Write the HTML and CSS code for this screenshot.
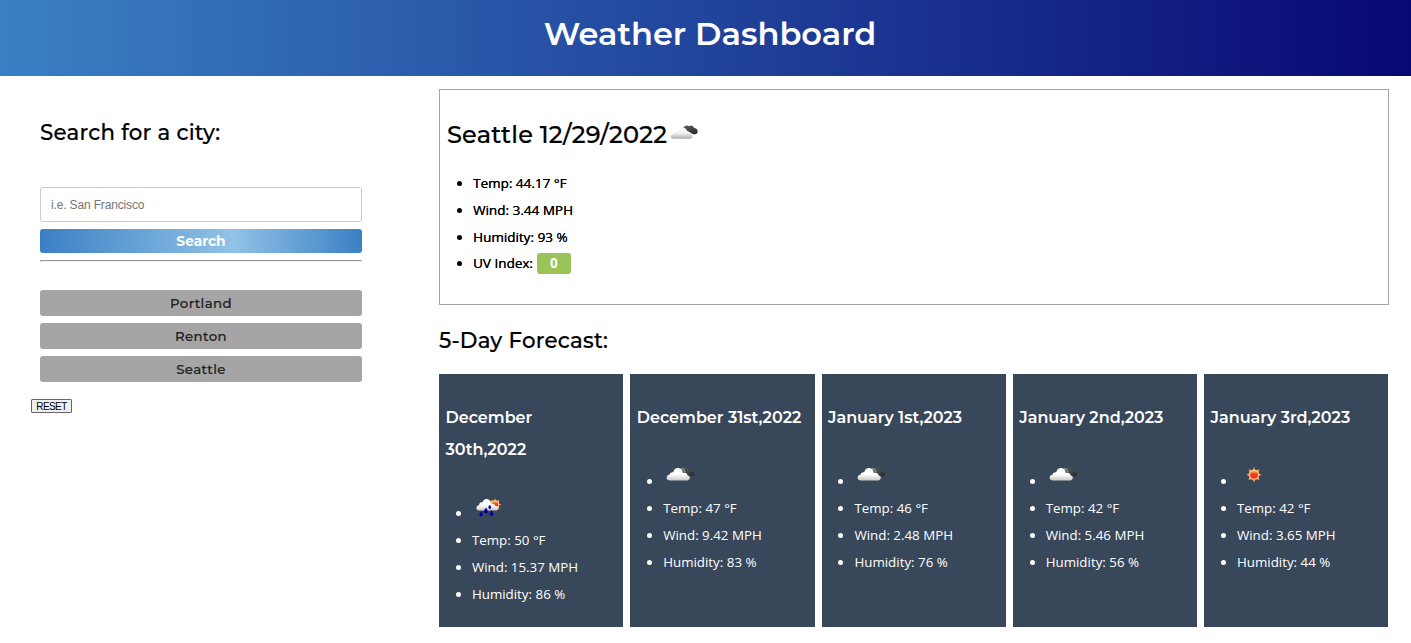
FILE: index.html
```html
<!DOCTYPE html>
<html lang="en">
<head>
<meta charset="utf-8">
<title>Weather Dashboard</title>
<link rel="stylesheet" href="styles.css">
</head>
<body>
<svg width="0" height="0" class="defs" aria-hidden="true">
  <defs>
    <linearGradient id="cloud" x1="0" y1="0" x2="0" y2="1"><stop offset="0.5" stop-color="#fff"/><stop offset="1" stop-color="#c8c8c8"/></linearGradient>
    <linearGradient id="pale" x1="0" y1="0" x2="0" y2="1"><stop offset="0" stop-color="#fff"/><stop offset="0.55" stop-color="#eee"/><stop offset="1" stop-color="#aaa"/></linearGradient>
    <linearGradient id="dark" x1="0" y1="0" x2="1" y2="1"><stop offset="0" stop-color="#666"/><stop offset="1" stop-color="#252525"/></linearGradient>
    <linearGradient id="sunfill" x1="0" y1="0" x2="0" y2="1"><stop offset="0.1" stop-color="#f5a14b"/><stop offset="0.45" stop-color="#f13a25"/><stop offset="1" stop-color="#ef3020"/></linearGradient>
    <g id="sun">
      <path d="M0-7.7 1.5-4.5 5.4-5.4 4.5-1.5 7.7 0 4.5 1.5 5.4 5.4 1.5 4.5 0 7.7-1.5 4.5-5.4 5.4-4.5 1.5-7.7 0-4.5-1.5-5.4-5.4-1.5-4.5Z" fill="#eba044"/>
      <circle r="5" fill="#ffdd98"/><circle r="4" fill="url(#sunfill)"/>
    </g>
    <path id="puff" d="M4 13.5C-.5 13.5-.3 8.200 3.500 7.800 3.700 5.500 5.800 4.800 7.200 5.300 8 1.700 11 .3 13.700 1.600 16 2.500 16.800 4.500 16.900 6.100 19.500 4.800 21.500 6.500 21.400 8.300 25 9 24.300 13.500 21 13.500Z"/>
    <path id="back" d="M14 3.500C15 .3 18.500-.6 20.300 1.800 22.500 1 24.500 2 24.600 4 27 3.800 28.500 5.500 28.400 6.800 28.800 8.500 26.500 9.300 24.500 9.100L21 8.600 17 5Z"/>
    <symbol id="clouds" viewBox="0 0 30 15"><use href="#back" fill="url(#dark)"/><path d="M14.300 2C16.500.9 18.500 3 18.900 5" fill="none" stroke="#bbb" stroke-width="1"/><use href="#puff" fill="url(#cloud)"/></symbol>
  </defs>
</svg>
<header class="banner"><h1>Weather Dashboard</h1></header>
<main class="layout">
  <aside class="sidebar">
    <h2 class="search-title">Search for a city:</h2>
    <input class="city-input" type="text" placeholder="i.e. San Francisco">
    <button class="search-btn">Search</button>
    <hr>
    <div class="history">
      <button>Portland</button>
      <button>Renton</button>
      <button>Seattle</button>
    </div>
    <button class="reset">RESET</button>
  </aside>
  <section class="content">
    <article class="current">
      <h2><span>Seattle 12/29/2022</span>
        <svg class="current-icon" viewBox="0 0 29 15"><path d="M12 4C14 .8 17-.6 19.200 1.200 21-.2 23.700 1 24 3 26.500 3 28 5 27.600 7 27.800 9 24.500 9.500 22.500 9L14 4Z" fill="url(#dark)"/><path d="M3.500 13.800C-.3 13.800 0 9 3.800 8.700 4 6.600 6 6 7.700 6.700 8.500 3.200 11 1.700 13.600 2.500 16 3.200 17 5 17 7 19.300 6 21 7.800 20.900 9.500 23.500 10.200 22.700 13.800 20 13.800Z" fill="url(#pale)"/></svg>
      </h2>
      <ul class="stats">
        <li>Temp: 44.17 °F</li>
        <li>Wind: 3.44 MPH</li>
        <li>Humidity: 93 %</li>
        <li>UV Index: <span class="uv">0</span></li>
      </ul>
    </article>
    <h2 class="forecast-title">5-Day Forecast:</h2>
    <div class="cards">
      <article class="card">
        <h3>December<br>30th,2022</h3>
        <ul class="stats">
          <li class="icon rain"><svg viewBox="0 0 30 20"><use href="#sun" transform="translate(20 6.500) scale(.82)"/><path d="M4 12.500C.5 12.500.5 7.500 4 7.200 4.500 4.500 6 4 7.400 4.500 8.500.8 12 0 14.500 2.300 16 3.500 16.100 5 16.200 6.200 18 5.100 20 6 20.200 7.700 24.500 7.800 24 12.500 21 12.500Z" fill="url(#cloud)"/><path d="M6.300 13.500c-2 2.800-2.200 4.700-.2 4.800s2.200-2 .2-4.800M11 10c-2.300 3-2.400 5-.2 5.200S13.200 13 11 10M16.500 12.500c-2.300 3-2 4.800 0 5s2.200-2 0-5M14.800 7c-1.600 2-1.700 3.500-.1 3.700S16.300 9.300 14.800 7" fill="#00009b" stroke="#00009b" stroke-width=".4"/></svg></li>
          <li>Temp: 50 °F</li><li>Wind: 15.37 MPH</li><li>Humidity: 86 %</li>
        </ul>
      </article>
      <article class="card">
        <h3>December 31st,2022</h3>
        <ul class="stats">
          <li class="icon"><svg viewBox="0 0 30 20"><use href="#clouds" width="30" height="15"/></svg></li>
          <li>Temp: 47 °F</li><li>Wind: 9.42 MPH</li><li>Humidity: 83 %</li>
        </ul>
      </article>
      <article class="card">
        <h3>January 1st,2023</h3>
        <ul class="stats">
          <li class="icon"><svg viewBox="0 0 30 20"><use href="#clouds" width="30" height="15"/></svg></li>
          <li>Temp: 46 °F</li><li>Wind: 2.48 MPH</li><li>Humidity: 76 %</li>
        </ul>
      </article>
      <article class="card">
        <h3>January 2nd,2023</h3>
        <ul class="stats">
          <li class="icon"><svg viewBox="0 0 30 20"><use href="#clouds" width="30" height="15"/></svg></li>
          <li>Temp: 42 °F</li><li>Wind: 5.46 MPH</li><li>Humidity: 56 %</li>
        </ul>
      </article>
      <article class="card">
        <h3>January 3rd,2023</h3>
        <ul class="stats">
          <li class="icon"><svg viewBox="0 0 30 20"><use href="#sun" transform="translate(14 7.700)"/></svg></li>
          <li>Temp: 42 °F</li><li>Wind: 3.65 MPH</li><li>Humidity: 44 %</li>
        </ul>
      </article>
    </div>
  </section>
</main>
</body>
</html>
```
FILE: styles.css
```css
* { box-sizing: border-box; }
body { margin: 0; background: #fff; color: #000; font-family: "Open Sans", "Noto Sans", sans-serif; font-size: 13.330px; overflow: hidden; }
h1, h2, h3, ul { margin: 0; padding: 0; }
h1, h2, h3, .search-btn, .history button { font-family: Montserrat, Inter, sans-serif; white-space: nowrap; }
h2, .history button { -webkit-text-stroke: .2px currentColor; }
.defs { display: block; height: 0; }
.banner { height: 76px; background: linear-gradient(90deg, #3a80c4, #080873); color: #fff; text-align: center; }
h1 { font-size: 32px; line-height: 67px; font-weight: 600; padding-left: 9px; }
.layout { display: flex; }
.sidebar { width: 439px; padding: 43px 77px 0 40px; }
.search-title { height: 68px; font-size: 21.330px; font-weight: 500; line-height: 27px; letter-spacing: .23px; }
.city-input { display: block; width: 322px; height: 35px; padding: 0 10px; border: 1px solid #ccc; border-radius: 3px; font: 12px "Liberation Sans", sans-serif; letter-spacing: -.15px; }
.city-input::placeholder { color: #757575; }
.search-btn, .history button { display: block; width: 322px; padding: 0; border: 0; border-radius: 3px; }
.search-btn { height: 24px; margin-top: 7px; background: linear-gradient(90deg, #3a80c4, #92c2e7 60%, #3a80c4); color: #fff; font-size: 13.800px; font-weight: 700; }
hr { margin: 7px 0 28px; height: 2px; border: 1px solid; border-color: #999 #eee #eee #999; }
.history { display: grid; gap: 7px; }
.history button { height: 26px; background: #a5a5a5; color: #222; font-size: 13.330px; font-weight: 500; letter-spacing: .4px; }
.reset { display: block; width: 41px; height: 14px; margin: 17px 0 0 -9px; padding: 0; background: #efefef; border: 1px solid #666; border-radius: 1px; color: #000; font: 10px/11px "Liberation Sans", sans-serif; letter-spacing: -.6px; }
.content { width: 950px; padding-top: 13px; }
.current { height: 216px; padding: 30px 7px 0; border: 1px solid #a5a5a5; }
.current h2 { display: flex; height: 50px; font-size: 24px; font-weight: 500; line-height: 30px; letter-spacing: .22px; }
.current h2 span { width: 223px; }
.current-icon { width: 29px; height: 15px; margin-top: 5px; }
.stats { padding-left: 26px; line-height: 26.800px; }
.current .stats { font-size: 13.500px; font-weight: 500; text-shadow: .2px 0 #000; }
.uv { display: inline-block; width: 34px; height: 21px; border-radius: 3px; background: #9ac457; color: #fff; font-weight: 700; line-height: 21px; text-align: center; text-shadow: none; margin-left: .5px; }
.forecast-title { height: 69px; padding-top: 20px; font-size: 21.330px; font-weight: 500; line-height: 30px; letter-spacing: .23px; }
.cards { display: grid; grid-template-columns: repeat(5, 1fr); gap: 6.800px; height: 253px; width: 949.500px; }
.card { padding: 28px 6.500px 0; background: #384759; color: #fff; }
.card h3 { font-size: 16px; font-weight: 600; line-height: 32px; margin-bottom: 33px; }
.card .stats { padding-left: 26.400px; }
.icon { height: 28px; }
.icon svg { width: 30px; height: 20px; margin-left: 3px; vertical-align: -1px; overflow: visible; }
.rain svg { margin-top: -1px; vertical-align: 0; }
```
